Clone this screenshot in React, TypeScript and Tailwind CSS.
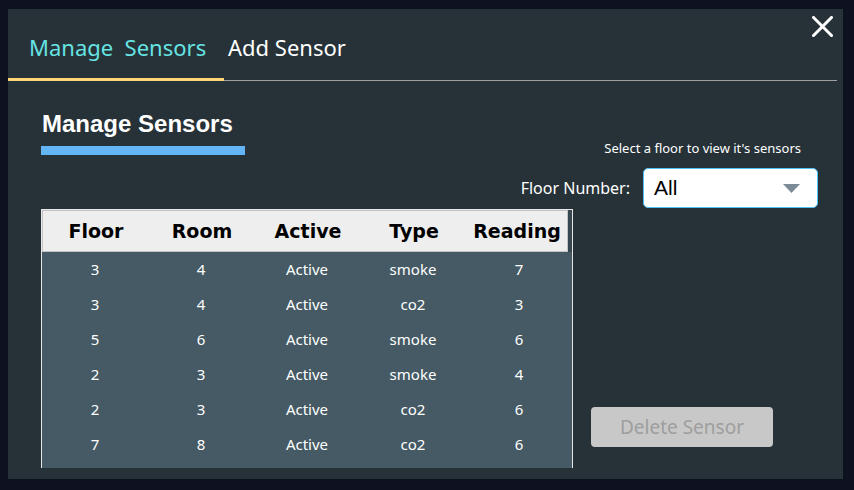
import React from 'react'

const rows = [
  { floor: 3, room: 4, active: 'Active', type: 'smoke', reading: 7 },
  { floor: 3, room: 4, active: 'Active', type: 'co2', reading: 3 },
  { floor: 5, room: 6, active: 'Active', type: 'smoke', reading: 6 },
  { floor: 2, room: 3, active: 'Active', type: 'smoke', reading: 4 },
  { floor: 2, room: 3, active: 'Active', type: 'co2', reading: 6 },
  { floor: 7, room: 8, active: 'Active', type: 'co2', reading: 6 },
]

const headers = ['Floor', 'Room', 'Active', 'Type', 'Reading']

export default function App() {
  return (
    <div className="w-[854px] h-[490px] bg-[#0d1120] pt-[9px] pl-[8px] font-['Noto_Sans',sans-serif]">
      <div className="relative w-[835px] h-[470px] bg-[#263238] flex flex-col">
        <button aria-label="Close" className="absolute top-[7px] right-[10px] w-[21px] h-[21px]">
          <svg width="21" height="21" viewBox="0 0 21 21">
            <path d="M1.5 1.5 L19.5 19.5 M19.5 1.5 L1.5 19.5" stroke="#ffffff" strokeWidth="3" strokeLinecap="square" />
          </svg>
        </button>

        {/* tabs */}
        <div className="flex h-[72px] mr-[6px]">
          <div className="w-[216px] h-full pl-[21px] pt-[23px] border-b-[3px] border-[#ffd675] text-[22px] leading-[30px] text-[#66e3e3] whitespace-pre">
            Manage  Sensors
          </div>
          <div className="flex-1 h-full pl-[4px] pt-[23px] border-b border-[#9e9e9e] text-[22px] leading-[30px] text-white">
            Add Sensor
          </div>
        </div>

        <div className="flex flex-1 pl-[33px]">
          {/* left column */}
          <div className="w-[532px] shrink-0 flex flex-col">
            <h1 className="mt-[29px] ml-[1px] text-[24px] leading-[28px] font-bold text-white font-['Liberation_Sans',Arial,sans-serif]">
              Manage Sensors
            </h1>
            <div className="mt-[8px] w-[204px] h-[9px] bg-[#64b5f6]" />

            <div className="mt-[54px] w-[532px] h-[259px] border border-b-0 border-[#e6e6e6] bg-[#455a64] flex flex-col">
              <div className="flex h-[42px] bg-[#37474f]">
                <div className="w-[526px] h-full bg-[#eeeeee] border border-[#c4c4c4] grid grid-cols-[106px_106px_106px_106px_1fr] items-center">
                  {headers.map((h) => (
                    <div key={h} className="text-center text-[19px] font-bold text-black font-['DejaVu_Sans',sans-serif]">
                      {h}
                    </div>
                  ))}
                </div>
              </div>
              {rows.map((r, i) => (
                <div key={i} className="grid grid-cols-5 h-[35px] items-center text-[15px] text-white text-center">
                  <div>{r.floor}</div>
                  <div>{r.room}</div>
                  <div>{r.active}</div>
                  <div>{r.type}</div>
                  <div>{r.reading}</div>
                </div>
              ))}
            </div>
          </div>

          {/* right column */}
          <div className="flex-1 min-w-0 flex flex-col">
            <div className="mt-[58px] pr-[42px] text-right text-[13px] leading-[18px] text-white whitespace-nowrap">
              Select a floor to view it's sensors
            </div>
            <div className="mt-[11px] pr-[25px] flex items-center justify-end gap-[13px]">
              <span className="shrink-0 whitespace-nowrap text-[16px] text-white">Floor Number:</span>
              <div className="shrink-0 w-[175px] h-[40px] rounded-[5px] border border-[#4fc3f7] bg-white flex items-center justify-between pl-[10px] pr-[17px]">
                <span className="text-[21px] text-black font-['Liberation_Sans',Arial,sans-serif]">All</span>
                <svg width="17" height="9" viewBox="0 0 17 9">
                  <path d="M0 0 H17 L8.5 9 Z" fill="#7d8b97" />
                </svg>
              </div>
            </div>
            <button className="mt-[199px] ml-[18px] w-[182px] h-[40px] rounded-[4px] bg-[#c8c8c8] text-[19px] text-[#9e9e9e]">
              Delete Sensor
            </button>
          </div>
        </div>
      </div>
    </div>
  )
}
